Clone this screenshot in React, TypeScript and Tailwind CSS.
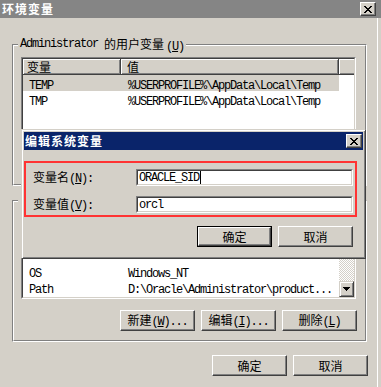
import type { ReactNode } from "react";

const cjk = "font-['Noto_Sans_CJK_SC','Noto_Sans_CJK_JP',sans-serif] text-[12px] leading-[14px]";
const lat = "font-['Liberation_Mono',monospace] text-[12px] leading-[14px] tracking-[-1.2px]";

function L({ children }: { children: ReactNode }) {
  return <span className={lat}>{children}</span>;
}

// "(X)" style access key, SimSun half-width look
function Key({ k, after }: { k: string; after?: string }) {
  return (
    <span className={lat}>
      (<span className="underline underline-offset-1">{k}</span>){after}
    </span>
  );
}

function CloseBtn() {
  return (
    <div className="flex h-[14px] w-[16px] items-center justify-center border border-t-white border-l-white border-r-[#404040] border-b-[#404040] bg-[#d4d0c8] shadow-[inset_-1px_-1px_0_#808080]">
      <svg width="8" height="7" viewBox="0 0 8 7" shapeRendering="crispEdges">
        <path
          d="M0 0h2v1H0z M6 0h2v1H6z M1 1h2v1H1z M5 1h2v1H5z M2 2h4v1H2z M3 3h2v1H3z M2 4h4v1H2z M1 5h2v1H1z M5 5h2v1H5z M0 6h2v1H0z M6 6h2v1H6z"
          fill="#000"
        />
      </svg>
    </div>
  );
}

function Btn({ children, def }: { children?: ReactNode; def?: boolean }) {
  return (
    <div className={`h-[21px] w-[75px] ${def ? "border border-black" : ""}`}>
      <div className="flex h-full items-center justify-center border border-t-white border-l-white border-r-[#404040] border-b-[#404040] bg-[#d4d0c8] shadow-[inset_-1px_-1px_0_#808080] text-black">
        <span className={cjk}>{children}</span>
      </div>
    </div>
  );
}

function Group({ label, children }: { label?: ReactNode; children: ReactNode }) {
  return (
    <div className="relative ml-[12px] h-[142px] w-[355px] border border-t-[#808080] border-l-[#808080] border-r-white border-b-white">
      <div className="flex h-full flex-col border border-t-white border-l-white border-r-[#808080] border-b-[#808080]">
        {children}
      </div>
      <div className="absolute left-[5px] top-[-8px] flex h-[14px] items-center bg-[#d4d0c8] px-[2px] text-black">
        {label}
      </div>
    </div>
  );
}

type Row = { name: string; value: string };

function ListView({ rows, selected, scroll }: { rows: Row[]; selected?: number; scroll?: boolean }) {
  return (
    <div className="ml-[7px] mt-[11px] h-[86px] w-[335px] border border-t-[#808080] border-l-[#808080] border-r-white border-b-white">
      <div className="flex h-full overflow-hidden border border-t-[#404040] border-l-[#404040] border-r-[#d4d0c8] border-b-[#d4d0c8] bg-white">
        <div className="flex flex-1 flex-col">
          <div className="flex h-[16px] bg-[#d4d0c8]">
            <div className={`flex w-[98px] items-center border-r border-b border-[#404040] pl-[4px] shadow-[inset_1px_1px_0_#fff,inset_-1px_-1px_0_#808080] ${cjk}`}>
              变量
            </div>
            <div className={`flex w-[218px] items-center border-r border-b border-[#404040] pl-[6px] shadow-[inset_1px_1px_0_#fff,inset_-1px_-1px_0_#808080] ${cjk}`}>
              值
            </div>
            <div className="flex-1 border-b border-[#404040] shadow-[inset_1px_1px_0_#fff,inset_0_-1px_0_#808080]" />
          </div>
          {rows.map((r, i) => (
            <div key={i} className={`flex h-[16px] w-[316px] items-center ${i === selected ? "bg-[#d4d0c8]" : ""}`}>
              <div className="w-[98px] pl-[6px] text-black">
                <L>{r.name}</L>
              </div>
              <div className="w-[218px] whitespace-nowrap pl-[7px] text-black">
                <L>{r.value}</L>
              </div>
            </div>
          ))}
        </div>
        {scroll && (
          <div className="flex w-[16px] flex-col">
            <div className="flex-1 bg-[repeating-conic-gradient(#fff_0_25%,#d4d0c8_0_50%)] bg-[length:2px_2px]" />
            <div className="flex h-[16px] items-center justify-center border border-t-[#d4d0c8] border-l-[#d4d0c8] border-r-[#404040] border-b-[#404040] bg-[#d4d0c8] shadow-[inset_1px_1px_0_#fff,inset_-1px_-1px_0_#808080]">
              <svg width="7" height="4" viewBox="0 0 7 4" shapeRendering="crispEdges">
                <path d="M0 0h7v1H0z M1 1h5v1H1z M2 2h3v1H2z M3 3h1v1H3z" fill="#000" />
              </svg>
            </div>
          </div>
        )}
      </div>
    </div>
  );
}

function Field({ value, caret }: { value: string; caret?: boolean }) {
  return (
    <div className="h-[17px] w-[217px] border border-t-[#808080] border-l-[#808080] border-r-white border-b-white">
      <div className="flex h-full items-center border border-t-[#404040] border-l-[#404040] border-r-[#d4d0c8] border-b-[#d4d0c8] bg-white pl-[1px] text-black">
        <L>{value}</L>
        {caret && <span className="ml-[1px] h-[13px] w-px bg-black" />}
      </div>
    </div>
  );
}

function EditDialog() {
  return (
    <div className="absolute left-[21px] top-[129px] flex h-[130px] w-[345px] flex-col border border-t-[#d4d0c8] border-l-[#d4d0c8] border-r-[#404040] border-b-[#404040] bg-[#d4d0c8] p-[2px] shadow-[inset_1px_1px_0_#fff,inset_-1px_-1px_0_#808080]">
      <div className="flex h-[18px] items-center justify-between bg-[#0a246a] pl-[1px] pr-[1px]">
        <span className={`${cjk} font-bold tracking-[1px] text-white`}>编辑系统变量</span>
        <CloseBtn />
      </div>
      <div className="mt-[11px] flex h-[56px] w-[333px] flex-col gap-[10px] border-2 border-[#f33] pl-[7px] pt-[6px]">
        <div className="flex items-center">
          <div className={`w-[103px] text-black ${cjk}`}>
            变量名<Key k="N" after=":" />
          </div>
          <Field value="ORACLE_SID" caret />
        </div>
        <div className="flex items-center">
          <div className={`w-[103px] text-black ${cjk}`}>
            变量值<Key k="V" after=":" />
          </div>
          <Field value="orcl" />
        </div>
      </div>
      <div className="mt-[9px] flex justify-end gap-[6px] pr-[10px]">
        <Btn def>确定</Btn>
        <Btn>取消</Btn>
      </div>
    </div>
  );
}

const userRows: Row[] = [
  { name: "TEMP", value: "%USERPROFILE%\\AppData\\Local\\Temp" },
  { name: "TMP", value: "%USERPROFILE%\\AppData\\Local\\Temp" },
];

// first two rows sit under the edit dialog
const systemRows: Row[] = [
  { name: "", value: "" },
  { name: "", value: "" },
  { name: "OS", value: "Windows_NT" },
  { name: "Path", value: "D:\\Oracle\\Administrator\\product..." },
];

export default function App() {
  return (
    <div className="relative flex h-[387px] w-[381px] flex-col overflow-hidden bg-[#d4d0c8]">
      <div className="flex h-[18px] shrink-0 items-center justify-between bg-[#858585] pl-[2px] pr-[5px]">
        <span className={`${cjk} font-bold tracking-[1px] text-white`}>环境变量</span>
        <CloseBtn />
      </div>

      <div className="flex flex-1">
        <div className="w-[377px]">
          <div className="mt-[26px]">
            <Group
              label={
                <>
                  <L>Administrator</L>
                  <span className={`${cjk} ml-[6px]`}>的用户变量</span>
                  <span className="ml-[2px]">
                    <Key k="U" />
                  </span>
                </>
              }
            >
              <ListView rows={userRows} selected={0} />
            </Group>
          </div>

          <div className="mt-[14px]">
            <Group label={<span className="w-[70px]" />}>
              <ListView rows={systemRows} scroll />
              <div className="mt-[11px] flex justify-end gap-[6px] pr-[8px]">
                <Btn>
                  新建<Key k="W" after="..." />
                </Btn>
                <Btn>
                  编辑<Key k="I" after="..." />
                </Btn>
                <Btn>
                  删除<Key k="L" />
                </Btn>
              </div>
            </Group>
          </div>

          <div className="mt-[13px] flex justify-end gap-[6px] pr-[9px]">
            <Btn>确定</Btn>
            <Btn>取消</Btn>
          </div>
        </div>
        <div className="w-px bg-white" />
      </div>

      <EditDialog />
    </div>
  );
}
